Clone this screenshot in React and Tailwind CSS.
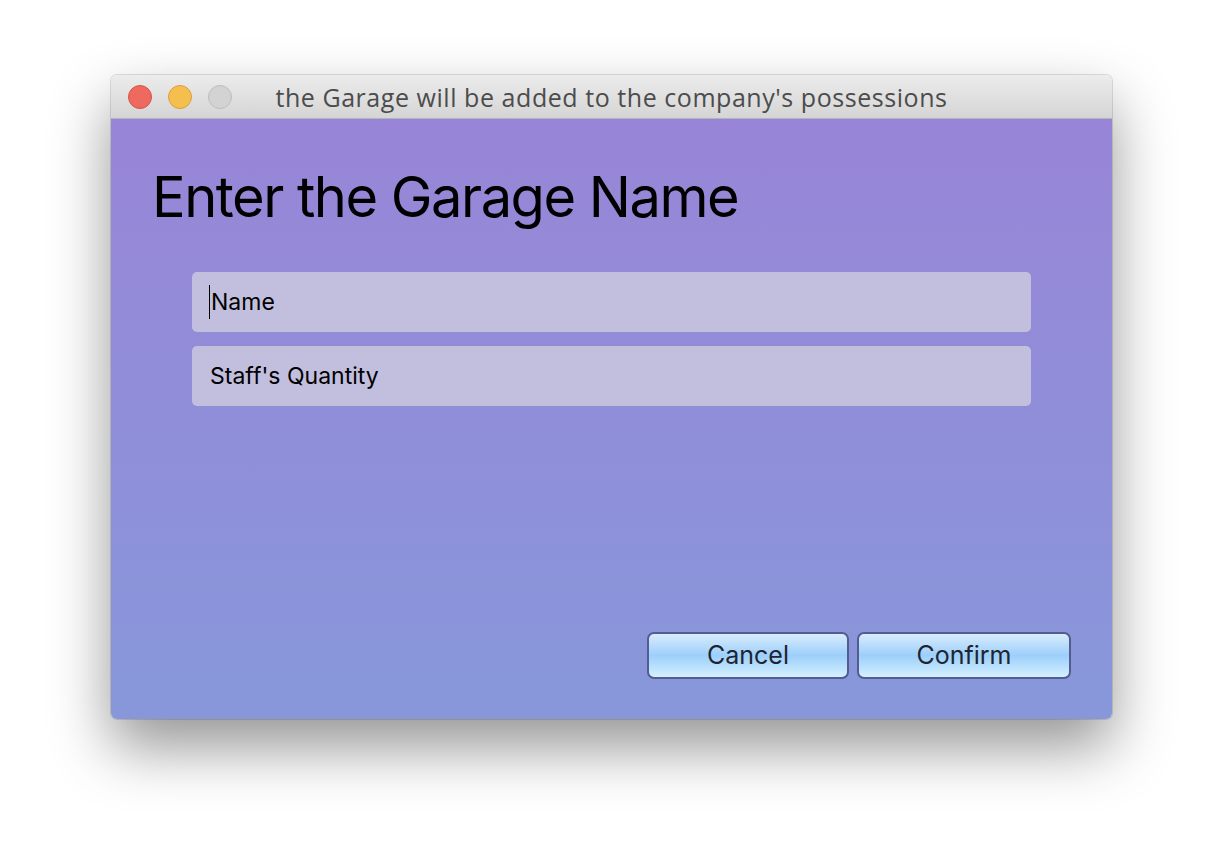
import React from 'react';

export default function App() {
  return (
    <div className="w-[1224px] h-[868px] bg-white pt-[75px] pl-[111px]" style={{ fontFamily: 'Inter, "Noto Sans", sans-serif' }}>
      <div className="w-[1001px] rounded-[6px] overflow-hidden shadow-[0_28px_60px_rgba(0,0,0,0.42),0_0_0_1px_rgba(0,0,0,0.12)]">
        {/* Title bar */}
        <div className="h-[44px] relative flex items-center justify-center bg-gradient-to-b from-[#ececec] to-[#d5d5d5] border-b border-[#b4b4b4]">
          <div className="absolute left-[17px] top-[10px] flex gap-[16px]">
            <span className="w-[24px] h-[24px] rounded-full bg-[#ee6a5f] border border-[#d5534a]" />
            <span className="w-[24px] h-[24px] rounded-full bg-[#f5bf4f] border border-[#d9a13b]" />
            <span className="w-[24px] h-[24px] rounded-full bg-[#d3d3d3] border border-[#bdbdbd]" />
          </div>
          <span className="pt-[2px] text-[25px] text-[#4c4c4c] tracking-[0.55px]" style={{ fontFamily: '"Open Sans", sans-serif' }}>
            the Garage will be added to the company's possessions
          </span>
        </div>

        {/* Content */}
        <div className="h-[600px] flex flex-col bg-gradient-to-b from-[#9885d7] to-[#8797da]">
          <h1 className="pl-[41px] pt-[46px] text-[56px] leading-[64px] text-black tracking-[-1.5px]">
            Enter the Garage Name
          </h1>
          <div className="mt-[43px] mx-[81px] flex flex-col gap-[14px]">
            <div className="h-[60px] rounded-[5px] bg-[#c2bede] flex items-center pl-[17px] text-[23px] text-black">
              <span className="w-[1px] h-[34px] bg-black mr-[1px]" />
              Name
            </div>
            <div className="h-[60px] rounded-[5px] bg-[#c2bede] flex items-center pl-[18px] text-[23px] text-black">
              Staff's Quantity
            </div>
          </div>
          <div className="mt-auto mb-[40px] mr-[41px] flex justify-end gap-[8px]">
            <button className="w-[202px] h-[47px] rounded-[7px] border-2 border-[#545b90] bg-gradient-to-b from-[#d8ecfd] via-[#9ccffa] to-[#d4f0ff] text-[25px] text-[#1e2530]">
              Cancel
            </button>
            <button className="w-[214px] h-[47px] rounded-[7px] border-2 border-[#545b90] bg-gradient-to-b from-[#d8ecfd] via-[#9ccffa] to-[#d4f0ff] text-[25px] text-[#1e2530]">
              Confirm
            </button>
          </div>
        </div>
      </div>
    </div>
  );
}
